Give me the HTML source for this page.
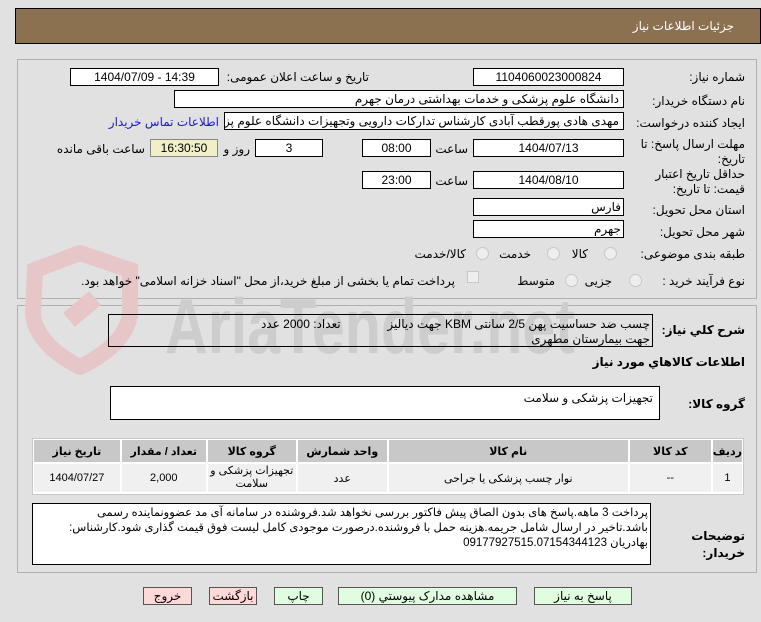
<!DOCTYPE html>
<html><head><meta charset="utf-8"><style>
*{box-sizing:border-box;margin:0;padding:0}
body{width:761px;height:622px;background:#e1e1e1;font-family:"Liberation Sans","DejaVu Sans",sans-serif;font-size:12px;color:#000;position:relative;overflow:hidden}
.a{position:absolute}
.box{position:absolute;background:#fff;border:1px solid #000;height:18px;line-height:16px;text-align:center;font-size:12px;white-space:nowrap;overflow:hidden}
.l{position:absolute;direction:rtl;text-align:right;white-space:nowrap;font-size:12px}
.rad{position:absolute;width:13px;height:13px;border-radius:50%;border:1px solid #c8c8c8;background:#eee}
.btn{position:absolute;top:587px;height:18px;border:1px solid #555;text-align:center;line-height:16px;font-size:12px;direction:rtl}
table{border-collapse:separate;border-spacing:2px}
td,th{text-align:center;font-size:11px}
th{background:#c8c8c8;font-weight:bold;height:22px}
td{background:#f0f0f0;height:28px}
</style></head><body>
<div class="a" style="left:15px;top:8px;width:746px;height:36px;background:#8b7150;border:1px solid #000"></div>
<div class="l" style="right:27px;top:19px;color:#fff;font-size:12px">جزئیات اطلاعات نیاز</div>

<div class="a" style="left:17px;top:59px;width:740px;height:240px;border:1px solid #b0b0b0"></div>
<div class="a" style="left:17px;top:305px;width:740px;height:268px;border:1px solid #b0b0b0"></div>

<!-- watermark -->
<svg class="a" style="left:15px;top:245px" width="570" height="130">
<path d="M20 25 L65 8 L115 25 L115 70 Q110 100 65 122 Q22 100 18 70 Z" fill="none" stroke="#e6c6c6" stroke-width="16"/>
<rect x="50" y="55" width="34" height="18" fill="#e6c6c6" transform="rotate(-40 67 64)"/>
<text x="150" y="108" font-family="Liberation Sans" font-size="78" font-weight="bold" fill="#cdcdcd" textLength="410" lengthAdjust="spacingAndGlyphs">AriaTender.net</text>
</svg>

<div class="l" style="right:16px;top:70px">شماره نیاز:</div>
<div class="box" style="left:473px;top:68px;width:151px">1104060023000824</div>
<div class="l" style="right:392px;top:70px">تاریخ و ساعت اعلان عمومی:</div>
<div class="box" style="left:70px;top:68px;width:149px">1404/07/09 - 14:39</div>

<div class="l" style="right:16px;top:94px">نام دستگاه خریدار:</div>
<div class="box" style="left:174px;top:90px;width:450px;text-align:right;direction:rtl;padding-right:4px">دانشگاه علوم پزشکی و خدمات بهداشتی  درمان جهرم</div>

<div class="l" style="right:16px;top:116px">ایجاد کننده درخواست:</div>
<div class="box" style="left:224px;top:112px;width:400px;text-align:right;direction:rtl;padding-right:4px">مهدی هادی پورقطب آبادی کارشناس تدارکات دارویی وتجهیزات دانشگاه علوم پزشکی</div>
<div class="l" style="right:542px;top:115px;color:#1a1acc">اطلاعات تماس خریدار</div>

<div class="l" style="right:16px;top:137px;line-height:15px">مهلت ارسال پاسخ: تا<br>تاریخ:</div>
<div class="box" style="left:473px;top:139px;width:151px">1404/07/13</div>
<div class="l" style="right:293px;top:142px">ساعت</div>
<div class="box" style="left:362px;top:139px;width:69px">08:00</div>
<div class="box" style="left:255px;top:139px;width:68px">3</div>
<div class="l" style="right:511px;top:142px">روز و</div>
<div class="box" style="left:150px;top:139px;width:68px;background:#f0efc8;border-color:#888">16:30:50</div>
<div class="l" style="right:616px;top:142px">ساعت باقی مانده</div>

<div class="l" style="right:16px;top:167px;line-height:15px">حداقل تاریخ اعتبار<br>قیمت: تا تاریخ:</div>
<div class="box" style="left:473px;top:171px;width:151px">1404/08/10</div>
<div class="l" style="right:293px;top:174px">ساعت</div>
<div class="box" style="left:362px;top:171px;width:69px">23:00</div>

<div class="l" style="right:16px;top:203px">استان محل تحویل:</div>
<div class="box" style="left:473px;top:198px;width:151px;text-align:right;padding-right:2px">فارس</div>
<div class="l" style="right:16px;top:225px">شهر محل تحویل:</div>
<div class="box" style="left:473px;top:220px;width:151px;text-align:right;padding-right:2px">جهرم</div>

<div class="l" style="right:16px;top:247px">طبقه بندی موضوعی:</div>
<div class="rad" style="left:604px;top:247px"></div><div class="l" style="right:173px;top:247px">کالا</div>
<div class="rad" style="left:547px;top:247px"></div><div class="l" style="right:230px;top:247px">خدمت</div>
<div class="rad" style="left:476px;top:247px"></div><div class="l" style="right:295px;top:247px">کالا/خدمت</div>

<div class="l" style="right:16px;top:274px">نوع فرآیند خرید :</div>
<div class="rad" style="left:629px;top:274px"></div><div class="l" style="right:149px;top:274px">جزیی</div>
<div class="rad" style="left:565px;top:274px"></div><div class="l" style="right:206px;top:274px">متوسط</div>
<div class="a" style="left:467px;top:271px;width:12px;height:12px;border:1px solid #c8c8c8;background:#eee"></div>
<div class="l" style="right:306px;top:274px">پرداخت تمام یا بخشی از مبلغ خرید،از محل "اسناد خزانه اسلامی" خواهد بود.</div>

<div class="l" style="right:16px;top:323px;font-weight:bold">شرح کلي نياز:</div>
<div class="a" style="left:108px;top:314px;width:545px;height:33px;background:transparent;border:1px solid #000"></div>
<div class="l" style="right:111px;top:317px;line-height:15px">چسب ضد حساسیت پهن  2/5 سانتی  KBM  جهت دیالیز&nbsp;&nbsp;&nbsp;&nbsp;&nbsp;&nbsp;&nbsp;&nbsp;&nbsp;&nbsp;&nbsp;&nbsp;&nbsp;&nbsp;تعداد: 2000 عدد<br>جهت بیمارستان مطهری</div>
<div class="l" style="right:16px;top:355px;font-weight:bold">اطلاعات کالاهاي مورد نياز</div>

<div class="l" style="right:16px;top:397px;font-weight:bold">گروه کالا:</div>
<div class="box" style="left:110px;top:386px;width:550px;height:34px;text-align:right;padding:3px 6px;background:#fff;direction:rtl">تجهیزات پزشکی و سلامت</div>

<div class="a" style="left:32px;top:438px;width:712px;height:57px;border:1px solid #c8c8c8;background:#fff"></div>
<table class="a" style="left:32px;top:438px;width:712px;direction:rtl">
<tr><th style="width:28px">ردیف</th><th style="width:81px">کد کالا</th><th style="width:239px">نام کالا</th><th style="width:89px">واحد شمارش</th><th style="width:88px">گروه کالا</th><th style="width:84px">تعداد / مقدار</th><th>تاریخ نیاز</th></tr>
<tr><td>1</td><td>--</td><td>نوار چسب پزشکی یا جراحی</td><td>عدد</td><td style="line-height:13px">تجهیزات پزشکی و سلامت</td><td>2,000</td><td>1404/07/27</td></tr>
</table>

<div class="l" style="right:16px;top:528px;font-weight:bold;line-height:17px">توضیحات<br>خریدار:</div>
<div class="a" style="left:32px;top:503px;width:619px;height:62px;background:#fff;border:1px solid #000"></div>
<div class="l" style="right:113px;top:506px;line-height:15px;font-size:11.5px">پرداخت 3 ماهه.پاسخ های بدون الصاق پیش فاکتور بررسی نخواهد شد.فروشنده در سامانه آی مد عضوونماینده رسمی<br>باشد.تاخیر در ارسال شامل جریمه.هزینه حمل با فروشنده.درصورت موجودی کامل لیست فوق قیمت گذاری شود.کارشناس:<br>بهادریان 09177927515.07154344123</div>

<div class="btn" style="left:534px;width:98px;background:#e0fde0">پاسخ به نیاز</div>
<div class="btn" style="left:338px;width:179px;background:#e0fde0">مشاهده مدارک پیوستي (0)</div>
<div class="btn" style="left:274px;width:49px;background:#e0fde0">چاپ</div>
<div class="btn" style="left:209px;width:48px;background:#ffd8d8">بازگشت</div>
<div class="btn" style="left:143px;width:49px;background:#ffd8d8">خروج</div>
</body></html>
